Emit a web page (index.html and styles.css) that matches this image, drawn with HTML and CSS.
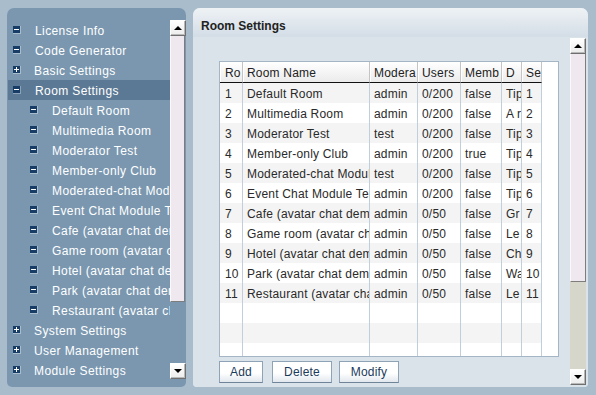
FILE: index.html
```html
<!DOCTYPE html>
<html>
<head>
<meta charset="utf-8">
<link rel="stylesheet" href="styles.css">
</head>
<body>
<div class="app">
  <aside class="side">
    <div class="tree">
      <div class="node"><svg class="ic" viewBox="0 0 8 8"><rect width="7" height="7" fill="#173c65"/><rect y="7" width="8" height="1" fill="#a7bccd"/><rect x="7" width="1" height="8" fill="#a7bccd"/><rect x="1" y="3" width="5" height="1" fill="#fff"/></svg><span>License Info</span></div>
      <div class="node"><svg class="ic" viewBox="0 0 8 8"><rect width="7" height="7" fill="#173c65"/><rect y="7" width="8" height="1" fill="#a7bccd"/><rect x="7" width="1" height="8" fill="#a7bccd"/><rect x="1" y="3" width="5" height="1" fill="#fff"/></svg><span>Code Generator</span></div>
      <div class="node plus"><svg class="ic" viewBox="0 0 8 8"><rect width="7" height="7" fill="#173c65"/><rect y="7" width="8" height="1" fill="#a7bccd"/><rect x="7" width="1" height="8" fill="#a7bccd"/><rect x="1" y="3" width="5" height="1" fill="#fff"/><rect x="3" y="1" width="1" height="5" fill="#fff"/></svg><span>Basic Settings</span></div>
      <div class="node sel"><svg class="ic" viewBox="0 0 8 8"><rect width="7" height="7" fill="#173c65"/><rect y="7" width="8" height="1" fill="#8aa3b8"/><rect x="7" width="1" height="8" fill="#8aa3b8"/><rect x="1" y="3" width="5" height="1" fill="#fff"/></svg><span>Room Settings</span></div>
      <div class="node child"><svg class="ic" viewBox="0 0 8 8"><rect width="7" height="7" fill="#173c65"/><rect y="7" width="8" height="1" fill="#a7bccd"/><rect x="7" width="1" height="8" fill="#a7bccd"/><rect x="1" y="3" width="5" height="1" fill="#fff"/></svg><span>Default Room</span></div>
      <div class="node child"><svg class="ic" viewBox="0 0 8 8"><rect width="7" height="7" fill="#173c65"/><rect y="7" width="8" height="1" fill="#a7bccd"/><rect x="7" width="1" height="8" fill="#a7bccd"/><rect x="1" y="3" width="5" height="1" fill="#fff"/></svg><span>Multimedia Room</span></div>
      <div class="node child"><svg class="ic" viewBox="0 0 8 8"><rect width="7" height="7" fill="#173c65"/><rect y="7" width="8" height="1" fill="#a7bccd"/><rect x="7" width="1" height="8" fill="#a7bccd"/><rect x="1" y="3" width="5" height="1" fill="#fff"/></svg><span>Moderator Test</span></div>
      <div class="node child"><svg class="ic" viewBox="0 0 8 8"><rect width="7" height="7" fill="#173c65"/><rect y="7" width="8" height="1" fill="#a7bccd"/><rect x="7" width="1" height="8" fill="#a7bccd"/><rect x="1" y="3" width="5" height="1" fill="#fff"/></svg><span>Member-only Club</span></div>
      <div class="node child"><svg class="ic" viewBox="0 0 8 8"><rect width="7" height="7" fill="#173c65"/><rect y="7" width="8" height="1" fill="#a7bccd"/><rect x="7" width="1" height="8" fill="#a7bccd"/><rect x="1" y="3" width="5" height="1" fill="#fff"/></svg><span>Moderated-chat Modu</span></div>
      <div class="node child"><svg class="ic" viewBox="0 0 8 8"><rect width="7" height="7" fill="#173c65"/><rect y="7" width="8" height="1" fill="#a7bccd"/><rect x="7" width="1" height="8" fill="#a7bccd"/><rect x="1" y="3" width="5" height="1" fill="#fff"/></svg><span>Event Chat Module Te</span></div>
      <div class="node child"><svg class="ic" viewBox="0 0 8 8"><rect width="7" height="7" fill="#173c65"/><rect y="7" width="8" height="1" fill="#a7bccd"/><rect x="7" width="1" height="8" fill="#a7bccd"/><rect x="1" y="3" width="5" height="1" fill="#fff"/></svg><span>Cafe (avatar chat dem</span></div>
      <div class="node child"><svg class="ic" viewBox="0 0 8 8"><rect width="7" height="7" fill="#173c65"/><rect y="7" width="8" height="1" fill="#a7bccd"/><rect x="7" width="1" height="8" fill="#a7bccd"/><rect x="1" y="3" width="5" height="1" fill="#fff"/></svg><span>Game room (avatar c</span></div>
      <div class="node child"><svg class="ic" viewBox="0 0 8 8"><rect width="7" height="7" fill="#173c65"/><rect y="7" width="8" height="1" fill="#a7bccd"/><rect x="7" width="1" height="8" fill="#a7bccd"/><rect x="1" y="3" width="5" height="1" fill="#fff"/></svg><span>Hotel (avatar chat dem</span></div>
      <div class="node child"><svg class="ic" viewBox="0 0 8 8"><rect width="7" height="7" fill="#173c65"/><rect y="7" width="8" height="1" fill="#a7bccd"/><rect x="7" width="1" height="8" fill="#a7bccd"/><rect x="1" y="3" width="5" height="1" fill="#fff"/></svg><span>Park (avatar chat dem</span></div>
      <div class="node child"><svg class="ic" viewBox="0 0 8 8"><rect width="7" height="7" fill="#173c65"/><rect y="7" width="8" height="1" fill="#a7bccd"/><rect x="7" width="1" height="8" fill="#a7bccd"/><rect x="1" y="3" width="5" height="1" fill="#fff"/></svg><span>Restaurant (avatar ch</span></div>
      <div class="node plus"><svg class="ic" viewBox="0 0 8 8"><rect width="7" height="7" fill="#173c65"/><rect y="7" width="8" height="1" fill="#a7bccd"/><rect x="7" width="1" height="8" fill="#a7bccd"/><rect x="1" y="3" width="5" height="1" fill="#fff"/><rect x="3" y="1" width="1" height="5" fill="#fff"/></svg><span>System Settings</span></div>
      <div class="node plus"><svg class="ic" viewBox="0 0 8 8"><rect width="7" height="7" fill="#173c65"/><rect y="7" width="8" height="1" fill="#a7bccd"/><rect x="7" width="1" height="8" fill="#a7bccd"/><rect x="1" y="3" width="5" height="1" fill="#fff"/><rect x="3" y="1" width="1" height="5" fill="#fff"/></svg><span>User Management</span></div>
      <div class="node plus"><svg class="ic" viewBox="0 0 8 8"><rect width="7" height="7" fill="#173c65"/><rect y="7" width="8" height="1" fill="#a7bccd"/><rect x="7" width="1" height="8" fill="#a7bccd"/><rect x="1" y="3" width="5" height="1" fill="#fff"/><rect x="3" y="1" width="1" height="5" fill="#fff"/></svg><span>Module Settings</span></div>
    </div>
    <div class="vscroll side-scroll">
      <div class="sbtn"><span class="tri-up"></span></div>
      <div class="thumb side-thumb"></div>
      <div class="track-clear"></div>
      <div class="sbtn"><span class="tri-down"></span></div>
    </div>
  </aside>

  <section class="main">
    <div class="main-head">Room Settings</div>
    <div class="main-body">
      <div class="content">
        <div class="grid">
          <table class="tbl">
            <colgroup>
              <col class="c1"><col class="c2"><col class="c3"><col class="c4"><col class="c5"><col class="c6"><col class="c7">
            </colgroup>
            <thead>
              <tr><th>Ro</th><th>Room Name</th><th>Modera</th><th>Users</th><th>Memb</th><th>D</th><th>Se</th></tr>
            </thead>
            <tbody>
              <tr><td>1</td><td>Default Room</td><td>admin</td><td>0/200</td><td>false</td><td>Tip</td><td>1</td></tr>
              <tr><td>2</td><td>Multimedia Room</td><td>admin</td><td>0/200</td><td>false</td><td>A r</td><td>2</td></tr>
              <tr><td>3</td><td>Moderator Test</td><td>test</td><td>0/200</td><td>false</td><td>Tip</td><td>3</td></tr>
              <tr><td>4</td><td>Member-only Club</td><td>admin</td><td>0/200</td><td>true</td><td>Tip</td><td>4</td></tr>
              <tr><td>5</td><td>Moderated-chat Modul</td><td>test</td><td>0/200</td><td>false</td><td>Tip</td><td>5</td></tr>
              <tr><td>6</td><td>Event Chat Module Tes</td><td>admin</td><td>0/200</td><td>false</td><td>Tip</td><td>6</td></tr>
              <tr><td>7</td><td>Cafe (avatar chat demo</td><td>admin</td><td>0/50</td><td>false</td><td>Gr</td><td>7</td></tr>
              <tr><td>8</td><td>Game room (avatar ch</td><td>admin</td><td>0/50</td><td>false</td><td>Le</td><td>8</td></tr>
              <tr><td>9</td><td>Hotel (avatar chat dem</td><td>admin</td><td>0/50</td><td>false</td><td>Ch</td><td>9</td></tr>
              <tr><td>10</td><td>Park (avatar chat dem</td><td>admin</td><td>0/50</td><td>false</td><td>Wa</td><td>10</td></tr>
              <tr><td>11</td><td>Restaurant (avatar cha</td><td>admin</td><td>0/50</td><td>false</td><td>Le</td><td>11</td></tr>
              <tr class="empty"><td></td><td></td><td></td><td></td><td></td><td></td><td></td></tr>
              <tr class="empty"><td></td><td></td><td></td><td></td><td></td><td></td><td></td></tr>
              <tr class="empty"><td></td><td></td><td></td><td></td><td></td><td></td><td></td></tr>
            </tbody>
          </table>
        </div>
        <div class="buttons">
          <button class="btn btn-add">Add</button>
          <button class="btn btn-del">Delete</button>
          <button class="btn btn-mod">Modify</button>
        </div>
      </div>
      <div class="vscroll main-scroll">
        <div class="sbtn"><span class="tri-up"></span></div>
        <div class="thumb main-thumb"></div>
        <div class="track-gray"></div>
        <div class="sbtn"><span class="tri-down"></span></div>
      </div>
    </div>
  </section>
</div>
</body>
</html>
```

FILE: styles.css
```css
html, body {
  margin: 0;
  padding: 0;
}
body {
  background: #a9bccc;
  font-family: "Liberation Sans", Arial, sans-serif;
  font-size: 12px;
  width: 596px;
  height: 395px;
  overflow: hidden;
}
.app {
  display: flex;
  gap: 7px;
  padding: 8px 0 0 7px;
  box-sizing: border-box;
  height: 395px;
}

/* ---------- left tree panel ---------- */
.side {
  width: 179px;
  height: 379px;
  box-sizing: border-box;
  background: #7a97af;
  border-radius: 7px 7px 5px 5px;
  padding: 12px 0 0 1px;
  display: flex;
  align-items: flex-start;
}
.tree {
  width: 162px;
  height: 360px;
  overflow: hidden;
}
.node {
  height: 20px;
  display: flex;
  align-items: center;
  padding-left: 5px;
  white-space: nowrap;
  color: #fff;
  letter-spacing: 0.4px;
}
.node span {
  margin-top: 2px;
}
.node.plus span {
  margin-left: -1px;
}
.node.child {
  padding-left: 22px;
}
.node.sel {
  background: #5b7994;
}
.ic {
  width: 8px;
  height: 8px;
  flex: none;
  margin-right: 14px;
}

/* ---------- scrollbars ---------- */
.vscroll {
  width: 16px;
  display: flex;
  flex-direction: column;
  flex: none;
}
.side-scroll {
  height: 359px;
}
.sbtn {
  height: 16px;
  box-sizing: border-box;
  background: linear-gradient(#ffffff, #ececec);
  border-top: 1px solid #ffffff;
  border-left: 1px solid #ffffff;
  border-right: 1px solid #6f6f6f;
  border-bottom: 1px solid #6f6f6f;
  box-shadow: inset -1px -1px 0 #b8b8b8;
  display: flex;
  align-items: center;
  justify-content: center;
  flex: none;
}
.tri-up {
  width: 0;
  height: 0;
  border-left: 4px solid transparent;
  border-right: 4px solid transparent;
  border-bottom: 4px solid #000;
  margin-top: -1px;
}
.tri-down {
  width: 0;
  height: 0;
  border-left: 4px solid transparent;
  border-right: 4px solid transparent;
  border-top: 4px solid #000;
}
.thumb {
  box-sizing: border-box;
  background: #efe9ef;
  border-left: 1px solid #fbf9fb;
  border-right: 1px solid #7d7d7d;
  border-bottom: 1px solid #7d7d7d;
  flex: none;
}
.side-thumb {
  height: 266px;
  width: 15px;
}
.track-clear {
  flex: 1;
}
.main-scroll {
  height: 347px;
  margin-top: 1px;
}
.main-thumb {
  height: 228px;
}
.track-gray {
  flex: 1;
  background: #d6d6cb;
}

/* ---------- main panel ---------- */
.main {
  width: 395px;
  height: 379px;
  border-radius: 7px 7px 4px 4px;
  overflow: hidden;
  display: flex;
  flex-direction: column;
  background: #dae3ea;
}
.main-head {
  height: 23px;
  padding: 6px 0 0 8px;
  line-height: 24px;
  font-weight: bold;
  color: #222;
  background: linear-gradient(#eef2f5, #d3dde6);
  flex: none;
}
.main-body {
  flex: 1;
  display: flex;
  background: #dae3ea;
}
.content {
  width: 377px;
  box-sizing: border-box;
  padding: 24px 0 0 26px;
  flex: none;
}
.grid {
  width: 340px;
  height: 296px;
  box-sizing: border-box;
  border: 1px solid #a4b6c6;
  background: #fff;
  overflow: hidden;
}
.tbl {
  table-layout: fixed;
  border-collapse: separate;
  border-spacing: 0;
  width: 322px;
  font-size: 12px;
  font-family: "Liberation Sans", Arial, sans-serif;
  letter-spacing: 0.2px;
}
.c1 { width: 23px; }
.c2 { width: 127px; }
.c3 { width: 48px; }
.c4 { width: 43px; }
.c5 { width: 41px; }
.c6 { width: 20px; }
.c7 { width: 20px; }
.tbl th {
  height: 21px;
  box-sizing: border-box;
  padding: 1px 0 0 4px;
  text-align: left;
  font-weight: normal;
  color: #222;
  background: linear-gradient(#ffffff, #ebebeb);
  border-right: 1px solid #c4c4c4;
  border-bottom: 1px solid #111;
  box-shadow: inset 1px 0 0 #fff;
  white-space: nowrap;
  overflow: hidden;
  text-overflow: clip;
}
.tbl td {
  height: 20px;
  box-sizing: border-box;
  padding: 1px 0 0 4px;
  color: #2a2a2a;
  border-right: 1px solid #c2cedb;
  white-space: nowrap;
  overflow: hidden;
  text-overflow: clip;
}
.tbl tbody tr:nth-child(odd) td {
  background: #f4f4f4;
}
.tbl th:first-child,
.tbl td:first-child {
  padding-left: 5px;
}

.buttons {
  display: flex;
  margin-top: 4px;
}
.btn {
  height: 22px;
  box-sizing: border-box;
  border: 1px solid #8fa3b7;
  border-bottom-color: #6f8499;
  background: linear-gradient(#ffffff 55%, #e2e8ee);
  color: #1b3a5c;
  font-family: "Liberation Sans", Arial, sans-serif;
  font-size: 12px;
  padding: 0;
  letter-spacing: 0.2px;
}
.btn-add { width: 44px; margin-right: 9px; }
.btn-del { width: 60px; margin-right: 7px; }
.btn-mod { width: 60px; }
```
